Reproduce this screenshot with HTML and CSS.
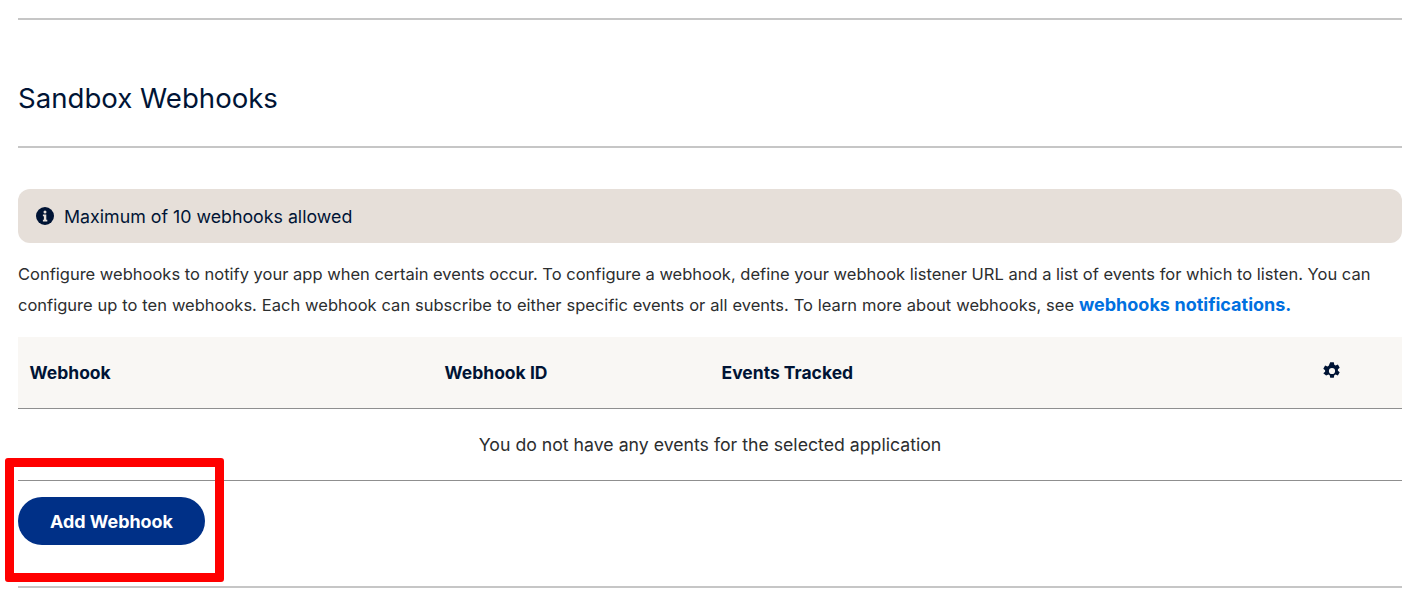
FILE: index.html
```html
<!DOCTYPE html>
<html lang="en">
<head>
    <meta charset="UTF-8">
    <meta name="viewport" content="width=device-width, initial-scale=1.0">
    <title>Sandbox Webhooks</title>
    <link rel="stylesheet" href="styles.css">
</head>
<body>

    <div class="page">
        <hr class="rule">
        <h2 class="section-title">Sandbox Webhooks</h2>
        <hr class="rule">

        <div class="alert">
            <svg class="alert-icon" viewBox="0 0 18 18" width="18" height="18">
                <circle cx="9" cy="9" r="9" fill="#001435"/>
                <circle cx="9" cy="4.9" r="1.5" fill="#e6dfd9"/>
                <path d="M6.9 7.6h3.4v5.2h1v1.6H6.9v-1.6h1v-3.6h-1z" fill="#e6dfd9"/>
            </svg>
            <span class="alert-text">Maximum of 10 webhooks allowed</span>
        </div>

        <p class="intro">Configure webhooks to notify your app when certain events occur. To configure a webhook, define your webhook listener URL and a list of events for which to listen. You can <span class="intro-rest">configure up to ten webhooks. Each webhook can subscribe to either specific events or all events. To learn more about webhooks, see <a href="#">webhooks notifications.</a></span></p>

        <div class="table">
            <div class="table-head">
                <span>Webhook</span>
                <span>Webhook ID</span>
                <span>Events Tracked</span>
                <svg class="gear" viewBox="0 0 18 18" width="18" height="18">
                    <path fill="#001435" fill-rule="evenodd" d="M7.2 0h3.6l.5 2.4 1.2.7 2.4-.8 1.8 3.1-1.8 1.6v1.4l1.8 1.6-1.8 3.1-2.4-.8-1.2.7-.5 2.4H7.2l-.5-2.4-1.2-.7-2.4.8L.3 11l1.8-1.6V8L.3 6.4l1.8-3.1 2.4.8 1.2-.7zM9 5.6a3.1 3.1 0 1 0 0 6.2 3.1 3.1 0 0 0 0-6.2z" transform="translate(0 .3)"/>
                </svg>
            </div>
            <div class="table-empty">You do not have any events for the selected application</div>
        </div>

        <button class="add-btn">Add Webhook</button>
        <hr class="rule last">
    </div>

    <div class="highlight"></div>

</body>
</html>
```

FILE: styles.css
```css
body {
    margin: 0;
    font-family: Inter, "Noto Sans", sans-serif;
    color: #2c2e2f;
    background: #fff;
}
.page {
    padding: 18px 17px 0 18px;
}
.rule {
    height: 2px;
    margin: 0;
    border: none;
    background: #c6c6c6;
}
.rule.last {
    margin-top: 41px;
}
.section-title {
    margin: 0;
    height: 126px;
    line-height: 156px;
    font-size: 27.6px;
    font-weight: 400;
    color: #001435;
    overflow: hidden;
}
.alert {
    display: flex;
    align-items: center;
    gap: 10px;
    height: 54px;
    margin-top: 41px;
    padding-left: 18px;
    border-radius: 12px;
    background: #e6dfd9;
    color: #001435;
    font-size: 17.8px;
}
.alert-text {
    padding-top: 1px;
}
.intro {
    margin: 16px 0 17px;
    font-size: 16.5px;
    line-height: 30.5px;
}
.intro-rest {
    word-spacing: 0.28px;
}
.intro a {
    color: #0070e0;
    font-size: 18px;
    font-weight: 700;
    text-decoration: none;
}
.table-head {
    display: grid;
    grid-template-columns: 415px 277px 1fr 79px;
    align-items: center;
    height: 71px;
    padding-left: 11.5px;
    background: #f9f7f4;
    border-bottom: 1px solid #8f8f8f;
    color: #001435;
    font-size: 17.5px;
    font-weight: 700;
}
.gear {
    margin-top: -3px;
}
.table-empty {
    height: 71px;
    line-height: 71px;
    text-align: center;
    border-bottom: 1px solid #8f8f8f;
    font-size: 17.7px;
}
.add-btn {
    display: block;
    width: 187px;
    height: 48px;
    margin-top: 16px;
    padding-right: 6px;
    border: none;
    border-radius: 24px;
    background: #003087;
    color: #fff;
    font-family: inherit;
    font-size: 17.9px;
    font-weight: 700;
}
.highlight {
    position: absolute;
    left: 5px;
    top: 458px;
    width: 201px;
    height: 106px;
    border: 9px solid #f00;
    border-radius: 3px;
}
```
